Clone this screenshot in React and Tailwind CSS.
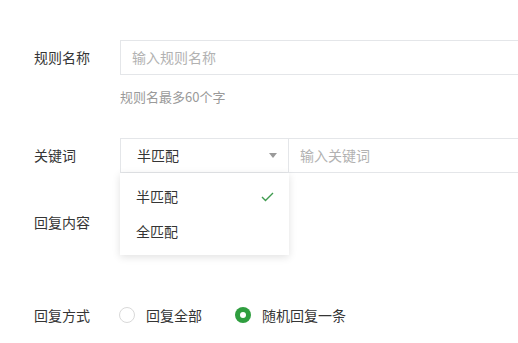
import React from "react";

function Radio({ checked, label }) {
  return (
    <label className="flex items-center gap-[11px]">
      {checked ? (
        <span className="flex h-[16px] w-[16px] items-center justify-center rounded-full bg-[#2f9e3f]">
          <span className="h-[6px] w-[6px] rounded-full bg-white" />
        </span>
      ) : (
        <span className="h-[16px] w-[16px] rounded-full border border-[#d9d9d9] bg-white" />
      )}
      <span className="text-[#353535]">{label}</span>
    </label>
  );
}

export default function App() {
  return (
    <div className="relative h-[343px] w-[518px] overflow-hidden bg-white font-['Noto_Sans_CJK_SC',sans-serif] text-[14px] text-[#353535]">
      <div className="flex flex-col pl-[34px] pt-[40px]">
        {/* rule name */}
        <div className="flex h-[35px] items-center">
          <div className="w-[86px] shrink-0">规则名称</div>
          <div className="flex h-[35px] w-[500px] shrink-0 items-center border border-[#e4e6e9] px-[11px] text-[#b2b2b2]">
            输入规则名称
          </div>
        </div>
        <div className="ml-[86px] mt-[12px] text-[13px] leading-[20px] text-[#9a9a9a]">规则名最多60个字</div>

        {/* keyword */}
        <div className="mt-[31px] flex h-[35px] items-center">
          <div className="w-[86px] shrink-0">关键词</div>
          <div className="relative h-[35px] w-[169px] shrink-0">
            <div className="flex h-[35px] items-center justify-between border border-[#e4e6e9] pl-[16px] pr-[11px]">
              <span>半匹配</span>
              <svg width="8" height="5" viewBox="0 0 8 5">
                <path d="M0 0h8L4 5z" fill="#9a9a9a" />
              </svg>
            </div>
            <div className="absolute left-0 top-full z-10 w-full bg-white py-[6px] shadow-[0_2px_8px_rgba(0,0,0,0.12)]">
              <div className="flex h-[35px] items-center justify-between pl-[16px] pr-[15px]">
                <span>半匹配</span>
                <svg width="13" height="10" viewBox="0 0 13 10">
                  <path d="M1 5l3.5 3.5L12 1" fill="none" stroke="#3f9b4f" strokeWidth="1.4" />
                </svg>
              </div>
              <div className="flex h-[35px] items-center pl-[16px]">全匹配</div>
            </div>
          </div>
          <div className="flex h-[35px] w-[300px] shrink-0 items-center border border-l-0 border-[#e4e6e9] px-[11px] text-[#b2b2b2]">
            输入关键词
          </div>
        </div>

        {/* reply content */}
        <div className="mt-[39px] flex h-[20px] items-center leading-[20px]">
          <div className="w-[86px] shrink-0">回复内容</div>
        </div>

        {/* reply mode */}
        <div className="mt-[73px] flex h-[20px] items-center leading-[20px]">
          <div className="w-[85px] shrink-0">回复方式</div>
          <div className="flex items-center gap-[33px]">
            <Radio label="回复全部" />
            <Radio checked label="随机回复一条" />
          </div>
        </div>
      </div>
    </div>
  );
}
